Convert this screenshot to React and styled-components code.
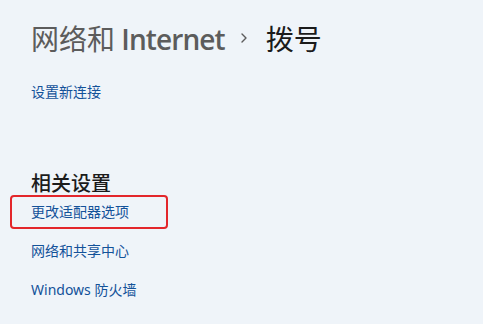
import React from "react";
import styled, { createGlobalStyle } from "styled-components";

const Global = createGlobalStyle`
  html, body { margin: 0; padding: 0; }
  body {
    background: #eff4f9;
    font-family: "Noto Sans", "Noto Sans CJK SC", sans-serif;
    width: 483px;
    height: 324px;
    overflow: hidden;
  }
`;

const Page = styled.div`
  display: flex;
  flex-direction: column;
  padding: 18px 0 0 31px;
`;

const Breadcrumb = styled.h1`
  display: flex;
  align-items: center;
  margin: 0;
  height: 40px;
  font-size: 28px;
  font-weight: 400;
  font-family: "Noto Sans CJK SC", sans-serif;
  letter-spacing: 0;
`;

const Crumb = styled.span`
  color: ${(p) => (p.$current ? "#1b1b1b" : "#5c5c5c")};
  font-weight: 400;
`;

const Latin = styled.span`
  font-family: "Open Sans", "Noto Sans", sans-serif;
  font-weight: 600;
  letter-spacing: -0.9px;
`;

const Chevron = styled.svg`
  margin: 0 18px 0 15px;
  flex: none;
`;

const Link = styled.a`
  display: block;
  color: #135299;
  font-size: 14px;
  line-height: 20px;
  text-decoration: none;
  font-family: "Noto Sans", "Noto Sans CJK SC", sans-serif;
`;

const TopLink = styled(Link)`
  margin-top: 24px;
`;

const Heading = styled.h2`
  margin: 69px 0 0 0;
  height: 24px;
  line-height: 24px;
  font-size: 20px;
  font-weight: 500;
  color: #1b1b1b;
  font-family: "Noto Sans CJK SC", sans-serif;
`;

const List = styled.div`
  display: flex;
  flex-direction: column;
  gap: 5px;
`;

const Item = styled.div`
  display: flex;
  align-items: center;
  box-sizing: border-box;
  width: 158px;
  height: 34px;
  margin-left: -21px;
  padding: 0 19px;
  border: 2px solid ${(p) => (p.$highlight ? "#e3262b" : "transparent")};
  border-radius: 4px;
`;

export default function App() {
  return (
    <>
      <Global />
      <Page>
        <Breadcrumb>
          <Crumb>
            网络和 <Latin>Internet</Latin>
          </Crumb>
          <Chevron width="8" height="10" viewBox="0 0 8 10">
            <path d="M2 1 L6 5 L2 9" fill="none" stroke="#5c5c5c" strokeWidth="1.4" strokeLinecap="round" strokeLinejoin="round" />
          </Chevron>
          <Crumb $current>拨号</Crumb>
        </Breadcrumb>
        <TopLink href="#">设置新连接</TopLink>
        <Heading>相关设置</Heading>
        <List>
          <Item $highlight>
            <Link href="#">更改适配器选项</Link>
          </Item>
          <Item>
            <Link href="#">网络和共享中心</Link>
          </Item>
          <Item>
            <Link href="#">Windows 防火墙</Link>
          </Item>
        </List>
      </Page>
    </>
  );
}
